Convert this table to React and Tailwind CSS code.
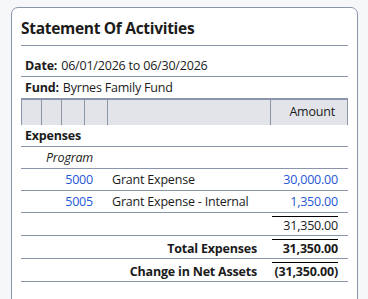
import React from "react";

const lines = [
  { acct: "5000", name: "Grant Expense", amount: "30,000.00" },
  { acct: "5005", name: "Grant Expense - Internal", amount: "1,350.00" },
];

const totals = [
  { label: "", amount: "31,350.00", bold: false },
  { label: "Total Expenses", amount: "31,350.00", bold: true },
  { label: "Change in Net Assets", amount: "(31,350.00)", bold: true },
];

export default function App() {
  return (
    <div className="h-[299px] overflow-hidden bg-[#f6f7f9] pl-[11px] pt-[7px] font-['Open_Sans',sans-serif] text-[12.5px] tracking-[-0.2px] text-[#1b1b1b]">
      <div className="w-[347px] h-[320px] rounded-t-[7px] border border-[#8b95a9] bg-white pl-[9px] pr-[9px]">
        {/* Title */}
        <div className="pt-[10px] pb-[7px] border-b border-[#8b95a9] text-[15.5px] tracking-[-0.3px] leading-[20px] font-bold">
          Statement Of Activities
        </div>

        {/* Report info */}
        <div className="mt-[10px] h-[21px] flex items-center pt-px pl-[4px] border-b border-[#8b95a9]">
          <span className="font-bold">Date:</span>
          <span className="ml-1">06/01/2026 to 06/30/2026</span>
        </div>
        <div className="h-[21px] flex items-center pt-px pl-[4px]">
          <span className="font-bold">Fund:</span>
          <span className="ml-1">Byrnes Family Fund</span>
        </div>

        {/* Table */}
        <div className="border-t-2 border-[#8b95a9]">
          <div className="flex h-[25px] bg-[#e2e4e9]">
            <div className="w-[20px] border-l border-[#8b95a9]" />
            <div className="w-[20px] border-l border-[#8b95a9]" />
            <div className="w-[23px] border-l border-[#8b95a9]" />
            <div className="w-[23px] border-l border-[#8b95a9]" />
            <div className="w-[163px] border-l border-[#8b95a9]" />
            <div className="w-[78px] border-x border-[#8b95a9] flex items-center justify-end pr-[12px]">
              Amount
            </div>
          </div>

          <div className="h-[22px] flex items-center pt-px pl-[4px] font-bold border-b border-[#8b95a9]">
            Expenses
          </div>
          <div className="h-[22px] flex items-center pt-px pl-[25px] italic border-b border-[#8b95a9]">
            Program
          </div>

          {lines.map((l) => (
            <div key={l.acct} className="h-[22px] flex items-center pt-px border-b border-[#8b95a9]">
              <div className="w-[86px] text-right pr-[14px] text-[#2457d6]">{l.acct}</div>
              <div className="w-[163px] pl-[5px]">{l.name}</div>
              <div className="w-[78px] text-right pr-[10px] text-[#2457d6]">{l.amount}</div>
            </div>
          ))}

          {totals.map((t, i) => (
            <div
              key={i}
              className={`flex h-[23px] pt-[3px] border-b border-[#8b95a9] ${t.bold ? "font-bold" : ""}`}
            >
              <div className="w-[86px]" />
              <div className="w-[163px] pt-[1px] text-right pr-[13px] leading-[18px]">{t.label}</div>
              <div className="w-[78px] pl-[2px] pr-[10px]">
                <div className="border-t border-black text-right leading-[18px]">{t.amount}</div>
              </div>
            </div>
          ))}
        </div>
      </div>
    </div>
  );
}
